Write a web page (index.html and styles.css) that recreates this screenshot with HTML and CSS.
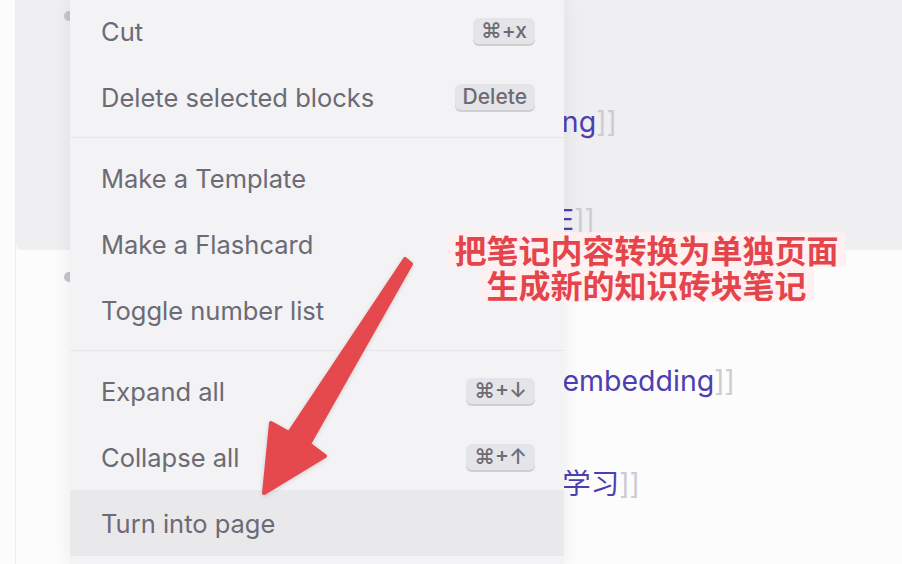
FILE: index.html
```html
<!DOCTYPE html>
<html lang="en">
<head>
<meta charset="UTF-8">
<title>Block context menu</title>
<link rel="stylesheet" href="styles.css">
</head>
<body>

<div class="page">
  <div class="gutter"></div>
  <div class="main">
    <div class="block selected">
      <div class="row head"><span class="bullet"></span></div>
      <div class="row line-a"><span class="br">[[</span><span class="link">Embedding</span><span class="br">]]</span></div>
      <div class="row line-b"><span class="br">[[</span><span class="link">E</span><span class="br">]]</span></div>
    </div>
    <div class="block">
      <div class="row head second"><span class="bullet"></span></div>
      <div class="row line-c"><span class="br">[[</span><span class="link">Word embedding</span><span class="br">]]</span></div>
      <div class="row line-d"><span class="br">[[</span><span class="link">机器学习</span><span class="br">]]</span></div>
    </div>
  </div>
</div>

<div class="menu">
  <div class="item"><span>Cut</span><kbd>⌘+x</kbd></div>
  <div class="item"><span>Delete selected blocks</span><kbd>Delete</kbd></div>
  <div class="sep"></div>
  <div class="item"><span>Make a Template</span></div>
  <div class="item"><span>Make a Flashcard</span></div>
  <div class="item"><span>Toggle number list</span></div>
  <div class="sep"></div>
  <div class="item"><span>Expand all</span><kbd>⌘+↓</kbd></div>
  <div class="item"><span>Collapse all</span><kbd>⌘+↑</kbd></div>
  <div class="item active"><span>Turn into page</span></div>
</div>

<div class="note">
  <span class="note-line">把笔记内容转换为单独页面</span>
  <span class="note-line">生成新的知识砖块笔记</span>
</div>

<svg class="arrow" viewBox="0 0 902 564" xmlns="http://www.w3.org/2000/svg">
  <polygon points="405,259 411,264 309,444 325,456 264,493 271,423 289,433"
           fill="#e5484d" stroke="#e5484d" stroke-width="4" stroke-linejoin="round"></polygon>
</svg>

</body>
</html>
```

FILE: styles.css
```css
body {
  margin: 0;
  background: #fcfcfd;
  font-family: Inter, "Noto Sans CJK SC", sans-serif;
  overflow: hidden;
  height: 564px;
}

.page {
  display: flex;
  height: 564px;
}

.gutter {
  width: 15px;
  flex: none;
}

.main {
  flex: 1;
  border-left: 1px solid #ebebee;
}

.block.selected {
  background: #efeef1;
  height: 250px;
  border-bottom-left-radius: 6px;
}

.row {
  height: 24px;
  line-height: 24px;
  display: flex;
  align-items: center;
  justify-content: flex-end;
  font-size: 28.5px;
  white-space: nowrap;
}

.row.head {
  height: 32px;
  justify-content: flex-start;
}

.row.head.second {
  margin-top: 11px;
}

.bullet {
  width: 10px;
  height: 10px;
  border-radius: 50%;
  background: #c6c5ca;
  margin-left: 48px;
}

/* lines end where their closing brackets sit */
.line-a { margin-top: 78px; width: 601px; }
.line-b { margin-top: 74px; width: 579px; }
.line-c { margin-top: 76px; width: 719px; }
.line-d { margin-top: 79px; width: 624px; }

.link {
  color: #4d3fb0;
}

.br {
  color: #cdccd1;
}

/* context menu */
.menu {
  position: absolute;
  left: 70px;
  top: -2px;
  width: 494px;
  padding-bottom: 10px;
  background: #f3f2f5;
  box-shadow: 0 0 18px rgba(0, 0, 0, 0.07);
}

.item {
  height: 66px;
  display: flex;
  align-items: center;
  justify-content: space-between;
  padding: 0 29px 0 31px;
  font-size: 25.5px;
  color: #6c6b73;
}

.item.active {
  background: #e9e8eb;
}

.sep {
  height: 1px;
  margin: 7px 0;
  background: #e7e6ea;
}

kbd {
  font-family: Inter, "DejaVu Sans", sans-serif;
  font-size: 21px;
  font-weight: 500;
  color: #6c6b73;
  background: #e5e4e8;
  border-radius: 6px;
  box-shadow: 0 2px 0 #cfced3;
  height: 26px;
  line-height: 26px;
  padding: 0 8px;
}

/* annotation */
.note {
  position: absolute;
  left: 445px;
  top: 232px;
  width: 403px;
  display: flex;
  flex-direction: column;
  align-items: center;
  font-family: "Noto Sans CJK SC", sans-serif;
  font-weight: 700;
  font-size: 32px;
  color: #e4454b;
}

.note-line {
  line-height: 35px;
  padding: 0 7px;
  background: rgba(255, 238, 240, 0.9);
  border-radius: 5px;
}

.arrow {
  position: absolute;
  left: 0;
  top: 0;
  width: 902px;
  height: 564px;
  filter: drop-shadow(0 1px 2px rgba(0, 0, 0, 0.15));
}
```
